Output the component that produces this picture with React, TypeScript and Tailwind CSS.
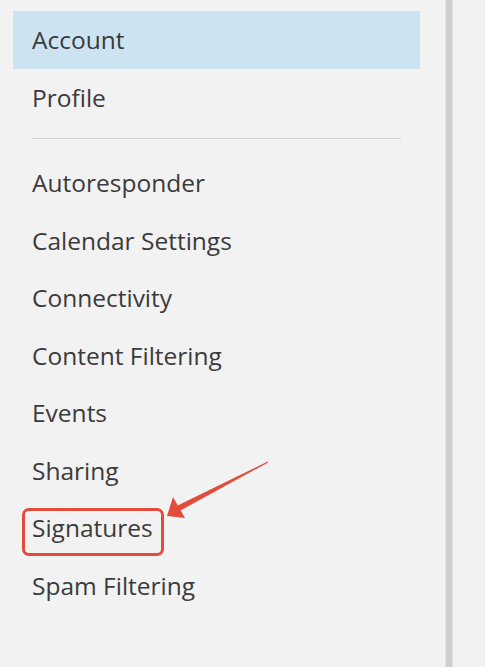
const topItems = ["Account", "Profile"];
const moreItems = [
  "Autoresponder",
  "Calendar Settings",
  "Connectivity",
  "Content Filtering",
  "Events",
  "Sharing",
  "Signatures",
  "Spam Filtering",
];

function NavRow({ label, active }: { label: string; active?: boolean }) {
  return (
    <div
      className={
        "relative flex h-[57.5px] items-center pl-[19px] text-[24.5px] text-[#3b3b3b] " +
        (active ? "bg-[#cce4f2]" : "")
      }
    >
      <span className="translate-y-[1px]">{label}</span>
      {/* annotation: red outline + arrow */}
      {label === "Signatures" && (
        <>
          <span className="pointer-events-none absolute left-[9px] top-[9px] h-[48px] w-[142px] rounded-[7px] border-[3px] border-[#e24c3b]" />
          <svg
            className="pointer-events-none absolute left-[140px] top-[-50px]"
            width="140"
            height="80"
            viewBox="0 0 140 80"
          >
            <polygon
              points="114.8,12.6 115.2,13.4 25.4,62.6 22.6,57.4"
              fill="#e24c3b"
            />
            <polygon points="14,67 20,48 32,69" fill="#e24c3b" />
          </svg>
        </>
      )}
    </div>
  );
}

export default function App() {
  return (
    <div
      className="flex h-[667px] w-[485px] overflow-hidden bg-[#f2f2f2]"
      style={{ fontFamily: '"Open Sans", "Noto Sans", sans-serif' }}
    >
      <nav className="ml-[13px] mt-[11px] w-[407px]">
        {topItems.map((t, i) => (
          <NavRow key={t} label={t} active={i === 0} />
        ))}
        <div className="ml-[19px] mr-[19px] mt-[12px] mb-[15px] h-px bg-[#d4d4d4]" />
        {moreItems.map((t) => (
          <NavRow key={t} label={t} />
        ))}
      </nav>
      {/* scrollbar */}
      <div className="ml-[25px] flex h-full w-[8px] border-x border-[#e2e2e2] bg-[#cfcfcf]" />
    </div>
  );
}
